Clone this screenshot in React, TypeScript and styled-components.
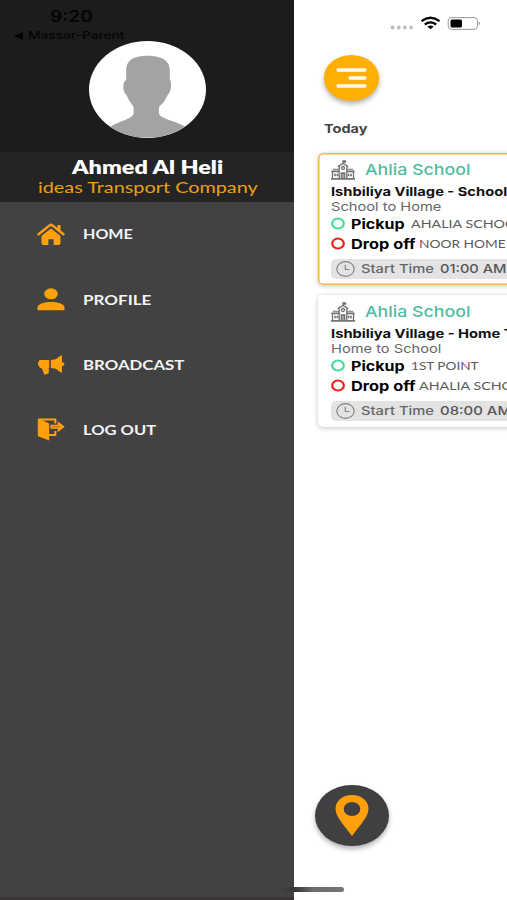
import React, { useLayoutEffect, useRef, useState } from "react";
import styled, { createGlobalStyle } from "styled-components";

const GlobalStyle = createGlobalStyle`
  *, *::before, *::after { box-sizing: border-box; }
  html, body { margin: 0; padding: 0; background: #fff; overflow: hidden; }
  svg { display: block; flex: none; }
`;

const sans = `Inter, "Liberation Sans", sans-serif`;
const display = `Lato, "Open Sans", sans-serif`;

/* ---------- text stretched to a set width ---------- */

interface TextStyle {
  $width: number;
  $size: number;
  $line: number;
  $weight?: number;
  $color?: string;
  $font?: string;
}

const TextBox = styled.div<TextStyle>`
  flex: none;
  width: ${(p) => p.$width}px;
  height: ${(p) => p.$line}px;
  font: ${(p) => p.$weight ?? 400} ${(p) => p.$size}px / ${(p) => p.$line}px ${(p) => p.$font ?? sans};
  color: ${(p) => p.$color ?? "#111"};
`;

const TextRun = styled.span`
  display: inline-block;
  vertical-align: top;
  white-space: pre;
  transform-origin: 0 50%;
`;

interface WideTextProps {
  children: string;
  width: number;
  size: number;
  line: number;
  weight?: number;
  color?: string;
  font?: string;
}

function WideText({ children, width, size, line, weight, color, font }: WideTextProps) {
  const ref = useRef<HTMLSpanElement>(null);
  const [scale, setScale] = useState(1);
  useLayoutEffect(() => {
    if (ref.current) setScale(width / ref.current.offsetWidth);
  }, [width, children]);
  return (
    <TextBox $width={width} $size={size} $line={line} $weight={weight} $color={color} $font={font}>
      <TextRun ref={ref} style={{ transform: `scaleX(${scale})` }}>{children}</TextRun>
    </TextBox>
  );
}

/* ---------- frame ---------- */

const Screen = styled.div`
  display: flex;
  position: relative;
  width: 507px;
  height: 900px;
  overflow: hidden;
  background: #fff;
`;

const Drawer = styled.aside`
  flex: none;
  width: 294.4px;
  height: 900px;
  background: #424242;
  border-bottom: 3px solid #3a3436;
`;

const Profile = styled.header`
  display: flex;
  flex-direction: column;
  height: 152px;
  background: #1c1c1c;
`;

const StatusLeft = styled.div`
  display: flex;
  flex-direction: column;
  height: 40.5px;
  padding: 6px 0 0 14px;
`;

const Clock = styled.div`
  padding-left: 35.5px;
`;

const BackLink = styled.div`
  display: flex;
  align-items: center;
  gap: 5px;
  margin-top: 3px;
`;

const Avatar = styled.div`
  width: 117px;
  height: 97px;
  margin: 0 auto;
  border-radius: 50%;
  overflow: hidden;
  background: #fff;
`;

const NameBand = styled.div`
  display: flex;
  flex-direction: column;
  align-items: center;
  height: 49.5px;
  padding: 4px 0 0 1px;
  background: #242424;
`;

const Menu = styled.nav`
  display: flex;
  flex-direction: column;
`;

const MenuItem = styled.a`
  display: flex;
  align-items: center;
  gap: 18px;
  height: 65.2px;
  padding: 1.6px 0 0 37px;
  border-bottom: 1px solid #474747;
`;

const Main = styled.main`
  flex: none;
  display: flex;
  flex-direction: column;
  align-items: flex-start;
  width: 330px;
  height: 900px;
  padding-left: 24px;
`;

const StatusRight = styled.div`
  display: flex;
  height: 55px;
  padding: 16px 0 0 72px;
`;

const RoundButton = styled.button<{ $w: number; $h: number; $bg: string }>`
  display: flex;
  align-items: center;
  justify-content: center;
  width: ${(p) => p.$w}px;
  height: ${(p) => p.$h}px;
  padding: 0;
  border: 0;
  border-radius: 50%;
  background: ${(p) => p.$bg};
  box-shadow: 0 3px 5px rgba(0, 0, 0, 0.3);
`;

const MenuButton = styled(RoundButton)`
  margin-left: 5.2px;
`;

const MapButton = styled(RoundButton)`
  margin: auto 0 54.5px -3.6px;
`;

const Heading = styled.div`
  margin: 20px 0 16.7px 5.6px;
`;

const Trips = styled.div`
  display: flex;
  flex-direction: column;
  gap: 10.3px;
`;

const Card = styled.article<{ $active?: boolean }>`
  width: 330px;
  height: 132px;
  padding: 6.5px 12.6px;
  border-radius: 5px;
  background: #fff;
  box-shadow: ${(p) => (p.$active ? "inset 0 0 0 1.5px #f5b74c, " : "")}0 1px 5px rgba(0, 0, 0, 0.24);
`;

const CardTitle = styled.div`
  display: flex;
  align-items: center;
  gap: 10.5px;
  height: 20px;
  margin-bottom: 4px;
`;

const Stop = styled.div`
  display: flex;
  align-items: center;
  height: 20px;
`;

const Gap = styled.span<{ $w: number }>`
  flex: none;
  width: ${(p) => p.$w}px;
`;

const StartPill = styled.div`
  display: flex;
  align-items: center;
  height: 20px;
  margin-top: 5.3px;
  padding-left: 5.5px;
  border-radius: 5px;
  background: #e3e3e3;
`;

const HomeIndicator = styled.div`
  position: absolute;
  left: 280px;
  bottom: 8.5px;
  width: 64px;
  height: 5px;
  border-radius: 3px;
  background: linear-gradient(90deg, #424242, #383838 24%, #6a6a6a 50%, #777);
`;

/* ---------- icons ---------- */

const orange = "#ffa00c";

const HomeIcon = () => (
  <svg width="28" height="23" viewBox="0 0 28 23" fill={orange}>
    <path d="M4.500 12.500 14 5l9.500 7.500v7.700q0 1.800-1.800 1.800H16.600V16.200h-5.200V22H6.300Q4.500 22 4.500 20.200Z" />
    <path d="M20.500 2h3v6h-3Z" />
    <path d="M1.600 11.300 12.600 2.400q1.400-1 2.800 0l11 8.900" fill="none" stroke={orange} strokeWidth="2.500" strokeLinecap="round" strokeLinejoin="round" />
    <path d="M3 13.400 14 4.600l11 8.800" fill="none" stroke="#424242" strokeWidth="1.200" />
  </svg>
);

const ProfileIcon = () => (
  <svg width="28" height="23" viewBox="0 0 28 23" fill={orange}>
    <ellipse cx="14" cy="5.800" rx="6.800" ry="5.500" />
    <path d="M.5 22.300v-2.500C.5 15.800 8 14.100 14 14.100s13.500 1.700 13.500 5.700v2.500Z" />
  </svg>
);

const BroadcastIcon = () => (
  <svg width="28" height="20" viewBox="0 0 28 20" fill={orange}>
    <path d="M2.500 5h9.700v8.500h-1.400l1.200 1-.5 4-4 1.200L4.800 13.400 2.200 12 .8 8.500Z" />
    <path d="m13.800 5 5-.7L23.400.8H25v16.400h-1.600l-4.600-3.500-5-.6ZM24.800 7.200q2.700 0 2.700 1.900t-2.700 1.900Z" />
  </svg>
);

const LogoutIcon = () => (
  <svg width="28" height="23" viewBox="0 0 28 23" fill={orange}>
    <path d="M.8 1h2l9.400 4.500V22.500L.8 18.300Z" />
    <path d="M1.500 1.500h16.800v4M12 17h6.300v-4" fill="none" stroke={orange} strokeWidth="2.100" />
    <path d="M13.500 6.700h7.200V3.200L27.700 8.700l-7 5.500v-3.500h-7.200Z" />
    <path d="M15 8.700h8.500" stroke="#8a6428" strokeWidth=".8" />
  </svg>
);

const Silhouette = () => (
  <svg width="117" height="97" viewBox="0 0 118 97" fill="#a3a3a3">
    <path d="M37.500 29C37.500 18 47 14.500 59 14.500S81.500 18 81.500 29v10c2 .8 1.500 10-.5 13-2 1.500-3 6-6 9.500-2 2-4.500 4-4.500 5.500v6c2 5 14 6.500 27 13V97H21V86c13-6.500 22-8 24-13v-6c0-2-2-3.500-3-5.500-3-4-4-8-6-9.500-2-3-2-12 1.500-13Z" />
  </svg>
);

const SchoolIcon = () => (
  <svg width="24" height="20" viewBox="0 0 24 20" fill="none" stroke="#6f6f6f" strokeWidth="1.300">
    <path d="M12 4V.8h2.500v1.200H12M6.800 6.600 12 3.500l5.200 3.100M8.200 6.500V18M15.800 6.500V18" />
    <circle cx="12" cy="8" r="1.500" />
    <path d="M1.800 9.300h6M16.200 9.300h6" strokeWidth="1.100" />
    <path d="M.5 11.300h7.500M16 11.300h7.500" strokeWidth="1.800" />
    <path d="M1.500 11v7M22.500 11v7" />
    <path d="M3.200 15h4M16.800 15h4" strokeWidth="2.600" strokeDasharray="1.600 .8" />
    <path d="M10.300 18v-5h3.400v5M12 13v5" />
    <path d="M0 18.900h24" strokeWidth="1.700" />
  </svg>
);

const ClockIcon = () => (
  <svg width="19" height="16" viewBox="0 0 19 16" fill="none" stroke="#858585" strokeWidth="1.200">
    <ellipse cx="9.500" cy="8" rx="8.700" ry="7.300" />
    <path d="M9.300 3.800v4.700h4.200" />
  </svg>
);

const Ring = ({ color }: { color: string }) => (
  <svg width="14" height="13" viewBox="0 0 14 13">
    <ellipse cx="7" cy="6.500" rx="5.800" ry="5" fill="none" stroke={color} strokeWidth="2.200" />
  </svg>
);

const StatusIcons = () => (
  <svg width="92" height="16" viewBox="0 0 92 16">
    <g fill="#bdbdbd">
      <circle cx="2.500" cy="11.500" r="1.900" />
      <circle cx="8.800" cy="11.500" r="1.900" />
      <circle cx="14.900" cy="11.500" r="1.900" />
      <circle cx="21.100" cy="11.500" r="1.900" />
    </g>
    <g fill="none" stroke="#000" strokeWidth="2.300">
      <path d="M31.500 5.200Q40.500-1.600 49.500 5.200" />
      <path d="M34.800 8.500q5.700-4.200 11.400 0" />
    </g>
    <path d="M37.300 10.500q3.200-2 6.400 0L40.500 13.200Z" />
    <rect x="58.200" y="1.600" width="29.300" height="11.800" rx="3.500" fill="none" stroke="#999" />
    <rect x="60.500" y="3.500" width="11.500" height="8" rx="1.500" />
    <path d="M88.800 5.500q2 2 0 4Z" fill="#777" />
  </svg>
);

const BurgerIcon = () => (
  <svg width="31" height="20" viewBox="0 0 31 20" stroke="#fffdf5" strokeWidth="3.300" strokeLinecap="round">
    <path d="M2 2h27M14 10h15M2 18h27" />
  </svg>
);

const PinIcon = () => (
  <svg width="34" height="41" viewBox="0 0 34 41">
    <path fillRule="evenodd" fill={orange} d="M17 0C7.500 0 .5 6 .5 13.800.5 22 9 30 17 41c8-11 16.500-19 16.500-27.200C33.500 6 26.500 0 17 0Zm0 7a8.300 7 0 1 1 0 14 8.300 7 0 1 1 0-14Z" />
  </svg>
);

/* ---------- content ---------- */

const menu = [
  { label: "HOME", width: 50, Icon: HomeIcon },
  { label: "PROFILE", width: 68, Icon: ProfileIcon },
  { label: "BROADCAST", width: 102, Icon: BroadcastIcon },
  { label: "LOG OUT", width: 73.5, Icon: LogoutIcon },
];

interface Label {
  text: string;
  width: number;
}

interface Trip {
  active?: boolean;
  route: Label;
  direction: Label;
  pickup: Label;
  dropoff: Label;
  time: Label;
}

const trips: Trip[] = [
  {
    active: true,
    route: { text: "Ishbiliya Village - School", width: 176 },
    direction: { text: "School to Home", width: 110 },
    pickup: { text: "AHALIA SCHOOL", width: 113 },
    dropoff: { text: "NOOR HOME", width: 87 },
    time: { text: "01:00 AM", width: 67 },
  },
  {
    route: { text: "Ishbiliya Village - Home T", width: 182.5 },
    direction: { text: "Home to School", width: 110 },
    pickup: { text: "1ST POINT", width: 68 },
    dropoff: { text: "AHALIA SCHOOL", width: 113 },
    time: { text: "08:00 AM", width: 71 },
  },
];

const TripCard = ({ trip }: { trip: Trip }) => (
  <Card $active={trip.active}>
    <CardTitle>
      <SchoolIcon />
      <WideText width={105.500} size={15} line={20} weight={450} color="#4fbc9f">Ahlia School</WideText>
    </CardTitle>
    <WideText width={trip.route.width} size={12.2} line={16} weight={700}>{trip.route.text}</WideText>
    <WideText width={trip.direction.width} size={12} line={14} color="#666">{trip.direction.text}</WideText>
    <Stop>
      <Ring color="#40dc9a" />
      <Gap $w={6.400} />
      <WideText width={53} size={13} line={20} weight={700} color="#000">Pickup</WideText>
      <Gap $w={6.300} />
      <WideText width={trip.pickup.width} size={12} line={20} color="#5c5c5c" font={display}>{trip.pickup.text}</WideText>
    </Stop>
    <Stop>
      <Ring color="#ee2018" />
      <Gap $w={5.800} />
      <WideText width={64} size={13} line={20} weight={700} color="#000">Drop off</WideText>
      <Gap $w={4} />
      <WideText width={trip.dropoff.width} size={12} line={20} color="#5c5c5c" font={display}>{trip.dropoff.text}</WideText>
    </Stop>
    <StartPill>
      <ClockIcon />
      <Gap $w={5.500} />
      <WideText width={72.500} size={12} line={20} weight={500} color="#666">Start Time</WideText>
      <Gap $w={6.500} />
      <WideText width={trip.time.width} size={12} line={20} weight={550} color="#555">{trip.time.text}</WideText>
    </StartPill>
  </Card>
);

export default function App() {
  return (
    <>
      <GlobalStyle />
      <Screen>
        <Drawer>
          <Profile>
            <StatusLeft>
              <Clock>
                <WideText width={43} size={16} line={20} weight={600} color="#040404">9:20</WideText>
              </Clock>
              <BackLink>
                <svg width="9" height="8" viewBox="0 0 9 8"><path d="M0 4 9 0v8Z" fill="#040404" /></svg>
                <WideText width={96} size={11} line={13} weight={500} color="#040404">Massar-Parent</WideText>
              </BackLink>
            </StatusLeft>
            <Avatar><Silhouette /></Avatar>
          </Profile>
          <NameBand>
            <WideText width={151.500} size={18.500} line={22} weight={800} color="#fff" font={display}>Ahmed Al Heli</WideText>
            <WideText width={219.500} size={15} line={18} color="#eba010" font={display}>ideas Transport Company</WideText>
          </NameBand>
          <Menu>
            {menu.map(({ label, width, Icon }) => (
              <MenuItem key={label}>
                <Icon />
                <WideText width={width} size={13.500} line={20} weight={700} color="#f4f4f4" font={display}>{label}</WideText>
              </MenuItem>
            ))}
          </Menu>
        </Drawer>
        <Main>
          <StatusRight><StatusIcons /></StatusRight>
          <MenuButton $w={55.500} $h={45.500} $bg="#ffae04"><BurgerIcon /></MenuButton>
          <Heading>
            <WideText width={43.500} size={12} line={16} weight={650} color="#444">Today</WideText>
          </Heading>
          <Trips>
            {trips.map((trip) => <TripCard key={trip.route.text} trip={trip} />)}
          </Trips>
          <MapButton $w={74} $h={60.500} $bg="#404040"><PinIcon /></MapButton>
        </Main>
        <HomeIndicator />
      </Screen>
    </>
  );
}
